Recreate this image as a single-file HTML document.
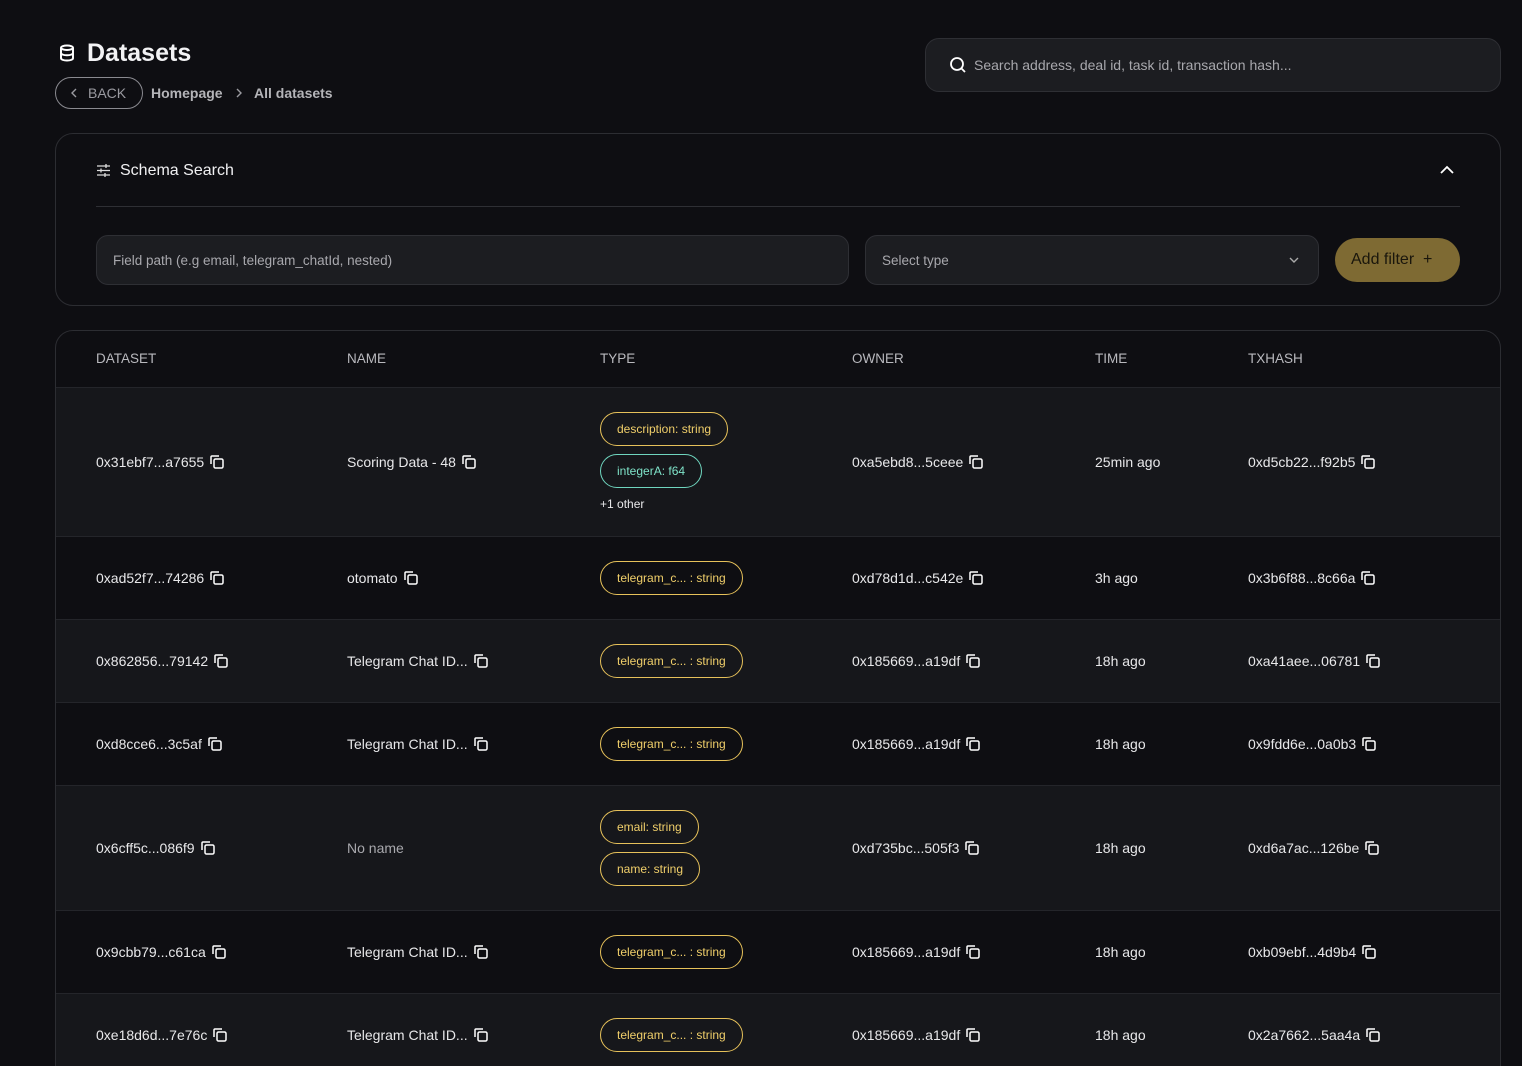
<!DOCTYPE html>
<html><head><meta charset="utf-8"><style>
*{box-sizing:border-box;margin:0;padding:0}
html,body{width:1522px;height:1066px;overflow:hidden}
body{background:#0e0e12;font-family:"Liberation Sans",sans-serif;color:#e8e8ea;position:relative}
.a{position:absolute}
.cp{display:inline-block;vertical-align:-3px;margin-left:5px}
.row{position:absolute;left:56px;width:1444px;border-top:1px solid #24252a}
.row.l{background:#16171b}
.c{position:absolute;font-size:14px;white-space:nowrap;transform:translateY(-50%)}
.tag{display:inline-block;height:34px;line-height:32px;border:1px solid #e6c15a;color:#f0cf6a;border-radius:17px;padding:0 16px;font-size:12px;white-space:nowrap}
.tag.g{border-color:#6fd6bf;color:#7fe3c9}
.h{position:absolute;top:351px;font-size:13.5px;color:#b9b9be}
</style></head><body>
<svg class="a" style="left:58px;top:44px" width="18" height="18" viewBox="0 0 24 24" fill="none" stroke="#fff" stroke-width="2.6"><ellipse cx="12" cy="5" rx="8" ry="3"/><path d="M4 5v14c0 1.7 3.6 3 8 3s8-1.3 8-3V5M4 12c0 1.7 3.6 3 8 3s8-1.3 8-3"/></svg>
<div class="a" style="left:87px;top:39px;font-size:25px;font-weight:bold;color:#f2f2f4">Datasets</div>
<div class="a" style="left:55px;top:77px;width:88px;height:32px;border:1px solid #8a8a90;border-radius:16px;font-size:14px;color:#9a9aa0;line-height:30px;padding-left:32px">BACK</div>
<svg class="a" style="left:69px;top:87px" width="10" height="12" viewBox="0 0 10 12" fill="none" stroke="#9a9aa0" stroke-width="1.4"><path d="M7 2L3 6l4 4"/></svg>
<div class="a" style="left:151px;top:85px;font-size:14px;font-weight:bold;color:#b4b4b8">Homepage</div>
<svg class="a" style="left:234px;top:87px" width="10" height="12" viewBox="0 0 10 12" fill="none" stroke="#9a9aa0" stroke-width="1.4"><path d="M3 2l4 4-4 4"/></svg>
<div class="a" style="left:254px;top:85px;font-size:14px;font-weight:bold;color:#b4b4b8">All datasets</div>
<div class="a" style="left:925px;top:38px;width:576px;height:54px;background:#1c1d21;border:1px solid #2e2f34;border-radius:14px"></div>
<svg class="a" style="left:949px;top:56px" width="18" height="18" viewBox="0 0 18 18" fill="none" stroke="#fff" stroke-width="1.8"><circle cx="8" cy="8" r="6"/><path d="M12.5 12.5L16 16"/></svg>
<div class="a" style="left:974px;top:57px;font-size:14px;color:#a8a8ad">Search address, deal id, task id, transaction hash...</div>

<div class="a" style="left:55px;top:133px;width:1446px;height:173px;border:1px solid #2c2d32;border-radius:18px"></div>
<svg class="a" style="left:96px;top:163px" width="15" height="15" viewBox="0 0 15 15" fill="none" stroke="#ddd" stroke-width="1.3"><path d="M1 3h13M1 7.5h13M1 12h13M10 1v4M5 5.5v4M9 10v4"/></svg>
<div class="a" style="left:120px;top:162px;font-size:16px;color:#f0f0f2">Schema Search</div>
<svg class="a" style="left:1440px;top:165px" width="14" height="10" viewBox="0 0 14 10" fill="none" stroke="#fff" stroke-width="1.8"><path d="M1 8l6-6 6 6"/></svg>
<div class="a" style="left:96px;top:206px;width:1364px;height:1px;background:#2e2f34"></div>
<div class="a" style="left:96px;top:235px;width:753px;height:50px;background:#1c1d21;border:1px solid #2e2f34;border-radius:12px;font-size:13.5px;color:#a8a8ad;padding:17px 0 0 16px">Field path (e.g email, telegram_chatId, nested)</div>
<div class="a" style="left:865px;top:235px;width:454px;height:50px;background:#1c1d21;border:1px solid #2e2f34;border-radius:12px;font-size:13.5px;color:#a8a8ad;padding:17px 0 0 16px">Select type</div>
<svg class="a" style="left:1288px;top:256px" width="12" height="8" viewBox="0 0 12 8" fill="none" stroke="#aaa" stroke-width="1.4"><path d="M2 2l4 4 4-4"/></svg>
<div class="a" style="left:1335px;top:238px;width:125px;height:44px;background:#7e6a33;border-radius:22px;font-size:16px;color:#1a160c;padding:13px 0 0 16px">Add filter &nbsp;+</div>

<div class="a" style="left:55px;top:330px;width:1446px;height:760px;border:1px solid #2c2d32;border-radius:18px"></div>
<div class="h" style="left:96px">DATASET</div><div class="h" style="left:347px">NAME</div><div class="h" style="left:600px">TYPE</div><div class="h" style="left:852px">OWNER</div><div class="h" style="left:1095px">TIME</div><div class="h" style="left:1248px">TXHASH</div>

<svg width="0" height="0" style="position:absolute"><defs><symbol id="cp" viewBox="0 0 16 16"><path d="M2 10V3a1 1 0 0 1 1-1h7" fill="none" stroke="#fff" stroke-width="1.5"/><rect x="5" y="5" width="9" height="9" rx="1.5" fill="none" stroke="#fff" stroke-width="1.5"/></symbol></defs></svg>

<div class="row l" style="top:387px;height:150px">
<div class="c" style="left:40px;top:74px">0x31ebf7...a7655<svg class="cp" width="16" height="16"><use href="#cp"/></svg></div>
<div class="c" style="left:291px;top:74px">Scoring Data - 48<svg class="cp" width="16" height="16"><use href="#cp"/></svg></div>
<div class="a" style="left:544px;top:24px"><span class="tag">description: string</span></div>
<div class="a" style="left:544px;top:66px"><span class="tag g">integerA: f64</span></div>
<div class="a" style="left:544px;top:109px;font-size:12px">+1 other</div>
<div class="c" style="left:796px;top:74px">0xa5ebd8...5ceee<svg class="cp" width="16" height="16"><use href="#cp"/></svg></div>
<div class="c" style="left:1039px;top:74px">25min ago</div>
<div class="c" style="left:1192px;top:74px">0xd5cb22...f92b5<svg class="cp" width="16" height="16"><use href="#cp"/></svg></div>
</div>

<div class="row" style="top:536px;height:83px">
<div class="c" style="left:40px;top:41px">0xad52f7...74286<svg class="cp" width="16" height="16"><use href="#cp"/></svg></div>
<div class="c" style="left:291px;top:41px">otomato<svg class="cp" width="16" height="16"><use href="#cp"/></svg></div>
<div class="a" style="left:544px;top:24px"><span class="tag">telegram_c... : string</span></div>
<div class="c" style="left:796px;top:41px">0xd78d1d...c542e<svg class="cp" width="16" height="16"><use href="#cp"/></svg></div>
<div class="c" style="left:1039px;top:41px">3h ago</div>
<div class="c" style="left:1192px;top:41px">0x3b6f88...8c66a<svg class="cp" width="16" height="16"><use href="#cp"/></svg></div>
</div>

<div class="row l" style="top:619px;height:83px">
<div class="c" style="left:40px;top:41px">0x862856...79142<svg class="cp" width="16" height="16"><use href="#cp"/></svg></div>
<div class="c" style="left:291px;top:41px">Telegram Chat ID...<svg class="cp" width="16" height="16"><use href="#cp"/></svg></div>
<div class="a" style="left:544px;top:24px"><span class="tag">telegram_c... : string</span></div>
<div class="c" style="left:796px;top:41px">0x185669...a19df<svg class="cp" width="16" height="16"><use href="#cp"/></svg></div>
<div class="c" style="left:1039px;top:41px">18h ago</div>
<div class="c" style="left:1192px;top:41px">0xa41aee...06781<svg class="cp" width="16" height="16"><use href="#cp"/></svg></div>
</div>

<div class="row" style="top:702px;height:83px">
<div class="c" style="left:40px;top:41px">0xd8cce6...3c5af<svg class="cp" width="16" height="16"><use href="#cp"/></svg></div>
<div class="c" style="left:291px;top:41px">Telegram Chat ID...<svg class="cp" width="16" height="16"><use href="#cp"/></svg></div>
<div class="a" style="left:544px;top:24px"><span class="tag">telegram_c... : string</span></div>
<div class="c" style="left:796px;top:41px">0x185669...a19df<svg class="cp" width="16" height="16"><use href="#cp"/></svg></div>
<div class="c" style="left:1039px;top:41px">18h ago</div>
<div class="c" style="left:1192px;top:41px">0x9fdd6e...0a0b3<svg class="cp" width="16" height="16"><use href="#cp"/></svg></div>
</div>

<div class="row l" style="top:785px;height:125px">
<div class="c" style="left:40px;top:62px">0x6cff5c...086f9<svg class="cp" width="16" height="16"><use href="#cp"/></svg></div>
<div class="c" style="left:291px;top:62px;color:#a8a8ad">No name</div>
<div class="a" style="left:544px;top:24px"><span class="tag">email: string</span></div>
<div class="a" style="left:544px;top:66px"><span class="tag">name: string</span></div>
<div class="c" style="left:796px;top:62px">0xd735bc...505f3<svg class="cp" width="16" height="16"><use href="#cp"/></svg></div>
<div class="c" style="left:1039px;top:62px">18h ago</div>
<div class="c" style="left:1192px;top:62px">0xd6a7ac...126be<svg class="cp" width="16" height="16"><use href="#cp"/></svg></div>
</div>

<div class="row" style="top:910px;height:83px">
<div class="c" style="left:40px;top:41px">0x9cbb79...c61ca<svg class="cp" width="16" height="16"><use href="#cp"/></svg></div>
<div class="c" style="left:291px;top:41px">Telegram Chat ID...<svg class="cp" width="16" height="16"><use href="#cp"/></svg></div>
<div class="a" style="left:544px;top:24px"><span class="tag">telegram_c... : string</span></div>
<div class="c" style="left:796px;top:41px">0x185669...a19df<svg class="cp" width="16" height="16"><use href="#cp"/></svg></div>
<div class="c" style="left:1039px;top:41px">18h ago</div>
<div class="c" style="left:1192px;top:41px">0xb09ebf...4d9b4<svg class="cp" width="16" height="16"><use href="#cp"/></svg></div>
</div>

<div class="row l" style="top:993px;height:80px">
<div class="c" style="left:40px;top:41px">0xe18d6d...7e76c<svg class="cp" width="16" height="16"><use href="#cp"/></svg></div>
<div class="c" style="left:291px;top:41px">Telegram Chat ID...<svg class="cp" width="16" height="16"><use href="#cp"/></svg></div>
<div class="a" style="left:544px;top:24px"><span class="tag">telegram_c... : string</span></div>
<div class="c" style="left:796px;top:41px">0x185669...a19df<svg class="cp" width="16" height="16"><use href="#cp"/></svg></div>
<div class="c" style="left:1039px;top:41px">18h ago</div>
<div class="c" style="left:1192px;top:41px">0x2a7662...5aa4a<svg class="cp" width="16" height="16"><use href="#cp"/></svg></div>
</div>
</body></html>
